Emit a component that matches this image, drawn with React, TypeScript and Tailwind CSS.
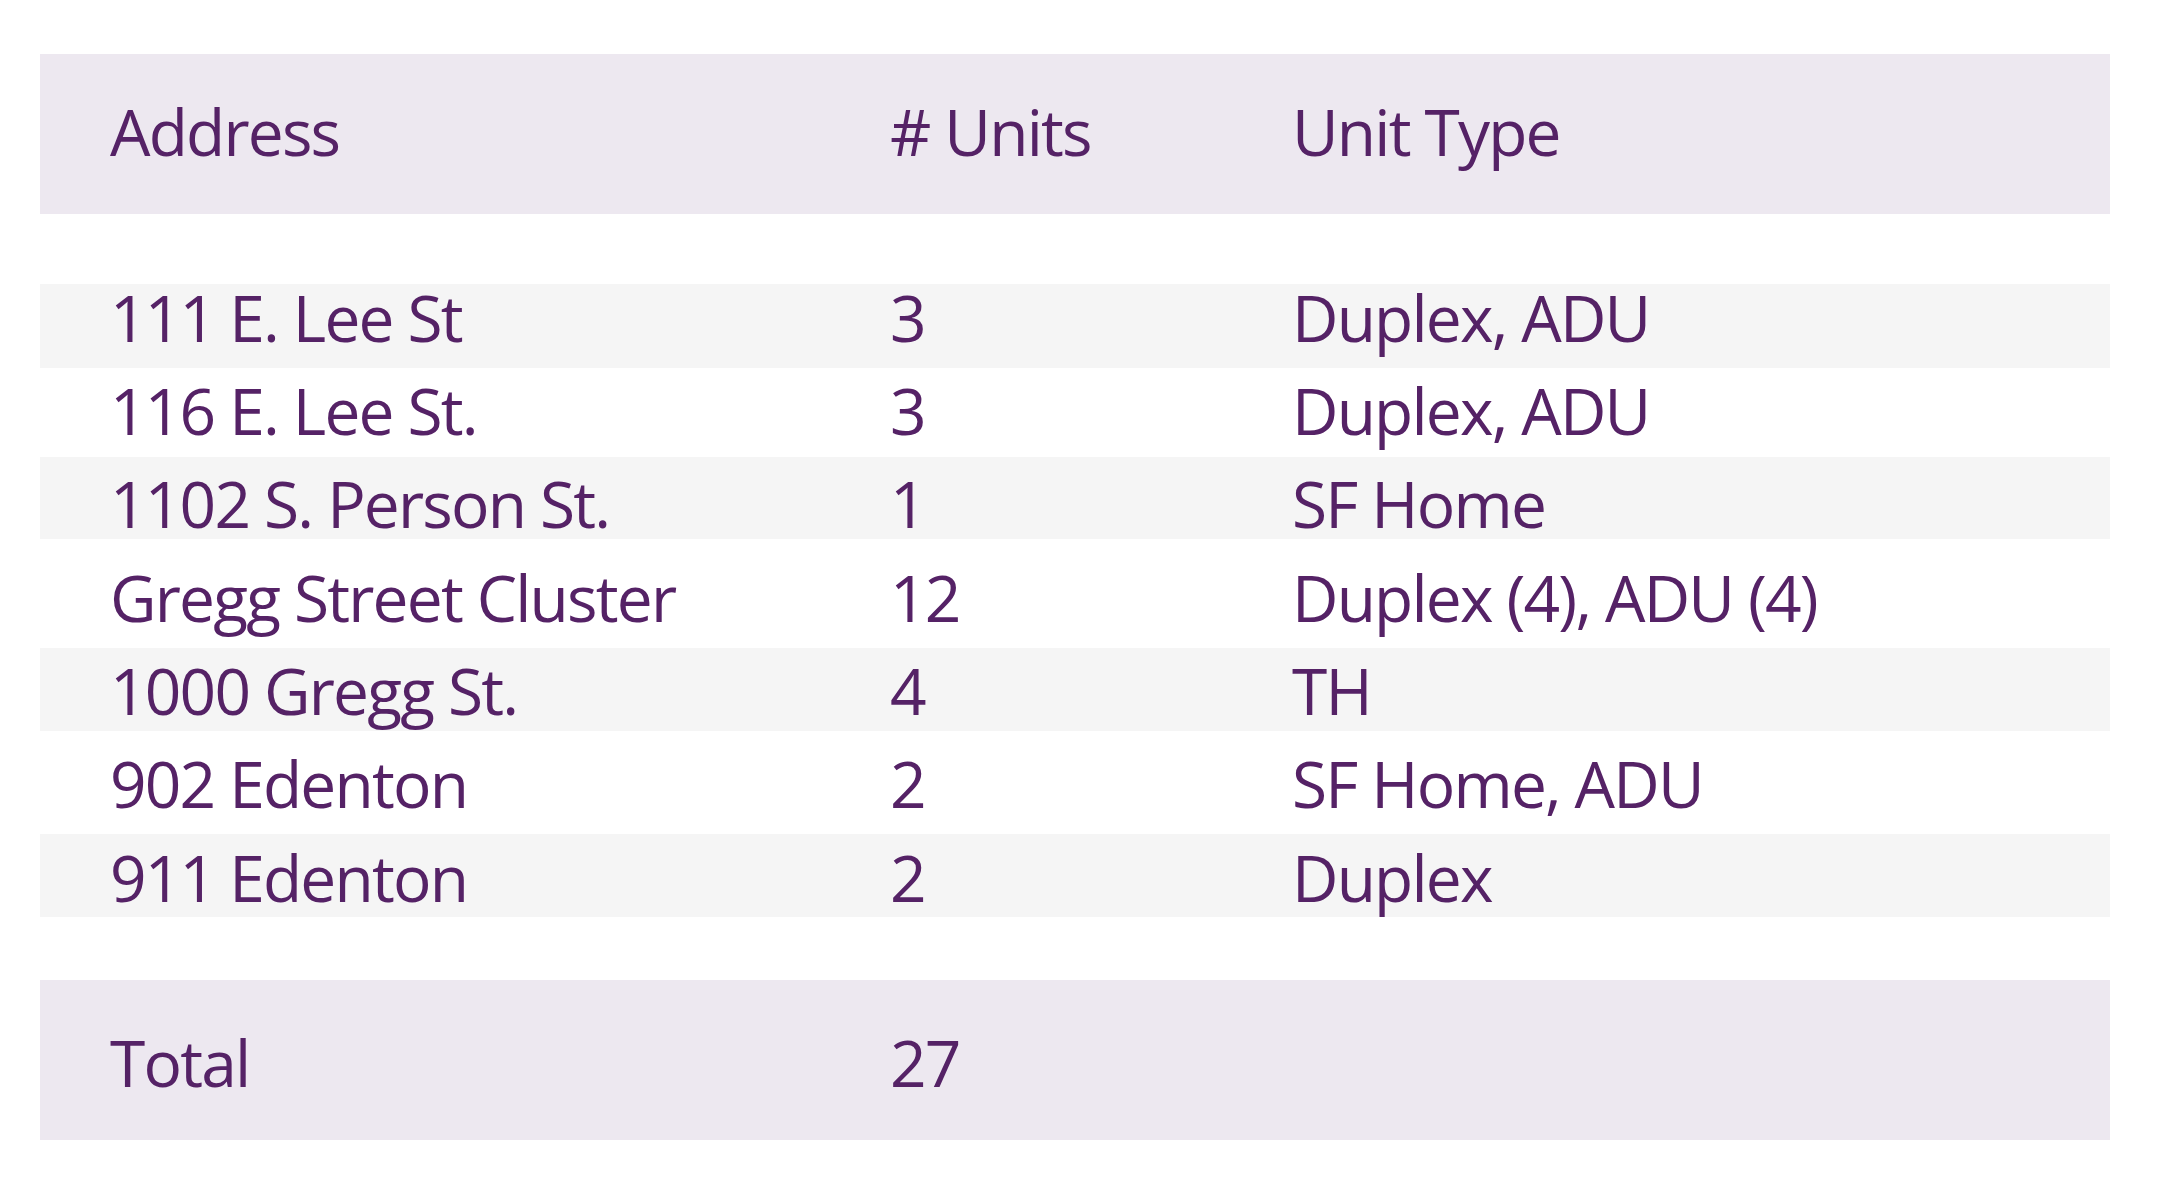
const rows = [
  { address: "111 E. Lee St", units: "3", type: "Duplex, ADU", cls: "h-[84px] pt-[2px] bg-[#f5f5f5]" },
  { address: "116 E. Lee St.", units: "3", type: "Duplex, ADU", cls: "h-[89px] pt-[11px]" },
  { address: "1102 S. Person St.", units: "1", type: "SF Home", cls: "h-[82px] pt-[15px] bg-[#f5f5f5]" },
  { address: "Gregg Street Cluster", units: "12", type: "Duplex (4), ADU (4)", cls: "h-[109px] pt-[27px]" },
  { address: "1000 Gregg St.", units: "4", type: "TH", cls: "h-[83px] pt-[11px] bg-[#f5f5f5]" },
  { address: "902 Edenton", units: "2", type: "SF Home, ADU", cls: "h-[103px] pt-[21px]" },
  { address: "911 Edenton", units: "2", type: "Duplex", cls: "h-[83px] pt-[12px] bg-[#f5f5f5]" },
];

function Row({ cells, className }: { cells: string[]; className: string }) {
  return (
    <div className={`grid grid-cols-[780px_402px_1fr] pl-[70px] ${className}`}>
      {cells.map((c, i) => (
        <div key={i} className="whitespace-nowrap">
          {c}
        </div>
      ))}
    </div>
  );
}

export default function App() {
  return (
    <main
      className="h-[1201px] w-[2167px] bg-white px-[40px] pt-[54px] text-[64px] leading-none tracking-[-1.8px] text-[#552266]"
      style={{ fontFamily: '"Open Sans", "Noto Sans", sans-serif' }}
    >
      <div className="w-[2070px]">
        <Row cells={["Address", "# Units", "Unit Type"]} className="h-[160px] pt-[46px] bg-[#ede8f0]" />
        <div className="h-[70px]" />
        {rows.map((r) => (
          <Row key={r.address} cells={[r.address, r.units, r.type]} className={r.cls} />
        ))}
        <div className="h-[63px]" />
        <Row cells={["Total", "27", ""]} className="h-[160px] pt-[51px] bg-[#ede8f0]" />
      </div>
    </main>
  );
}
